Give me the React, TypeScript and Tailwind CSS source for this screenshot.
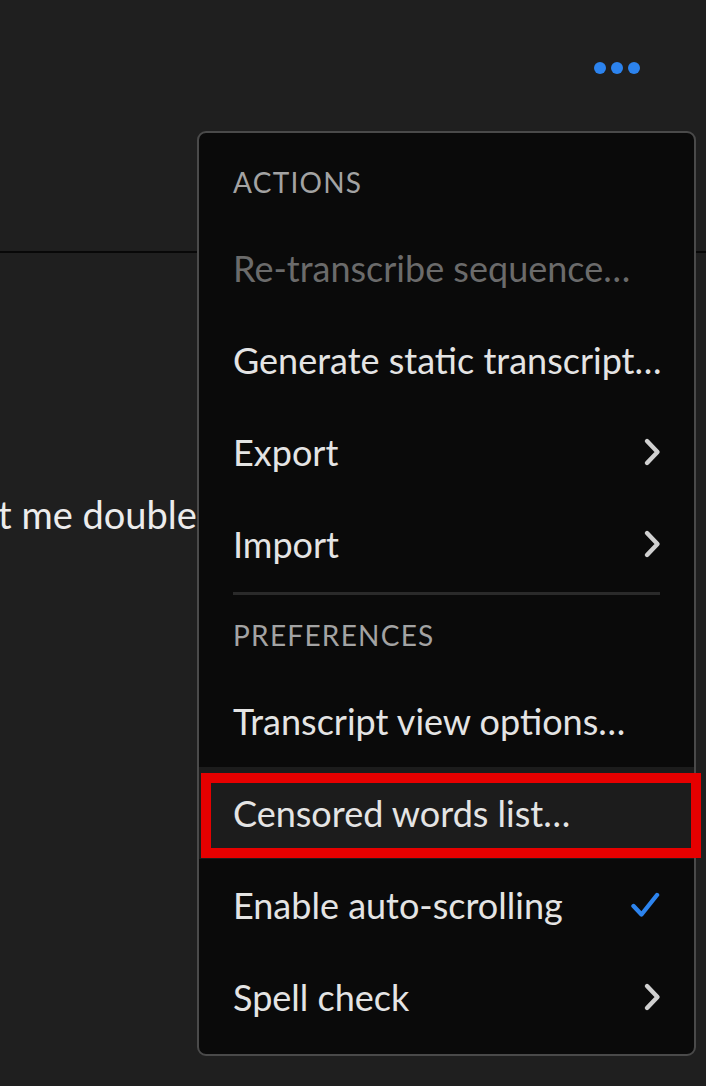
import React from "react";

type Item = {
  label: string;
  disabled?: boolean;
  submenu?: boolean;
  checked?: boolean;
  highlighted?: boolean;
};

const actions: Item[] = [
  { label: "Re-transcribe sequence…", disabled: true },
  { label: "Generate static transcript…" },
  { label: "Export", submenu: true },
  { label: "Import", submenu: true },
];

const preferences: Item[] = [
  { label: "Transcript view options…" },
  { label: "Censored words list…", highlighted: true },
  { label: "Enable auto-scrolling", checked: true },
  { label: "Spell check", submenu: true },
];

function Chevron() {
  return (
    <svg width="20" height="30" viewBox="0 0 20 30" fill="none">
      <path d="M5 4l10.5 11L5 26" stroke="#d0d0d0" strokeWidth="4.4" strokeLinecap="round" strokeLinejoin="round" />
    </svg>
  );
}

function Check() {
  return (
    <svg width="30" height="28" viewBox="0 0 30 28" fill="none">
      <path d="M3.5 15l8 8.5L27 4" stroke="#2d84ee" strokeWidth="4.4" strokeLinecap="round" strokeLinejoin="round" />
    </svg>
  );
}

function MenuRow({ item }: { item: Item }) {
  return (
    <div
      className={
        "flex h-[92px] items-center justify-between pl-[34px] pr-[32px] " +
        (item.highlighted ? "bg-[#1c1c1c]" : "")
      }
    >
      <span className={item.disabled ? "text-[#6b6b6b]" : "text-[#e4e4e4]"}>{item.label}</span>
      {item.submenu && <Chevron />}
      {item.checked && (
        <span className="mr-[2px]">
          <Check />
        </span>
      )}
    </div>
  );
}

function Header({ children }: { children: React.ReactNode }) {
  return (
    <div className="flex h-[80px] items-center pl-[34px] text-[28px] tracking-[0.045em] text-[#a3a3a3]">
      {children}
    </div>
  );
}

export default function App() {
  return (
    <div
      className="relative h-[1086px] w-[706px] overflow-hidden bg-[#1f1f1f]"
      style={{ fontFamily: "Lato, 'Open Sans', sans-serif" }}
    >
      {/* panel behind the menu */}
      <div className="flex h-[131px] items-center justify-end pr-[66px] pt-[4px]">
        <div className="flex gap-[5px]">
          <span className="h-[12px] w-[12px] rounded-full bg-[#2c83ee]" />
          <span className="h-[12px] w-[12px] rounded-full bg-[#2c83ee]" />
          <span className="h-[12px] w-[12px] rounded-full bg-[#2c83ee]" />
        </div>
      </div>
      <div className="mt-[120px] h-[2px] w-full bg-[#080808]" />
      <div className="mt-[233px] w-[197px] overflow-hidden">
        <div className="-ml-[40px] whitespace-nowrap text-[38px] text-[#ececec]">Let me double</div>
      </div>

      {/* context menu */}
      <div className="absolute left-[197px] top-[131px] h-[925px] w-[499px] rounded-[9px] border-2 border-[#4a4a4a] bg-[#0a0a0a] text-[36px]">
        <div className="pt-[9px]">
          <Header>ACTIONS</Header>
          {actions.map((a) => (
            <MenuRow key={a.label} item={a} />
          ))}
          <div className="mx-[34px] mt-[2px] h-[3px] bg-[#2a2a2a]" />
          <Header>PREFERENCES</Header>
          {preferences.map((p) => (
            <MenuRow key={p.label} item={p} />
          ))}
        </div>
      </div>

      {/* annotation */}
      <div className="absolute left-[201px] top-[773px] h-[85px] w-[500px] border-[10px] border-[#e60000]" />
    </div>
  );
}
